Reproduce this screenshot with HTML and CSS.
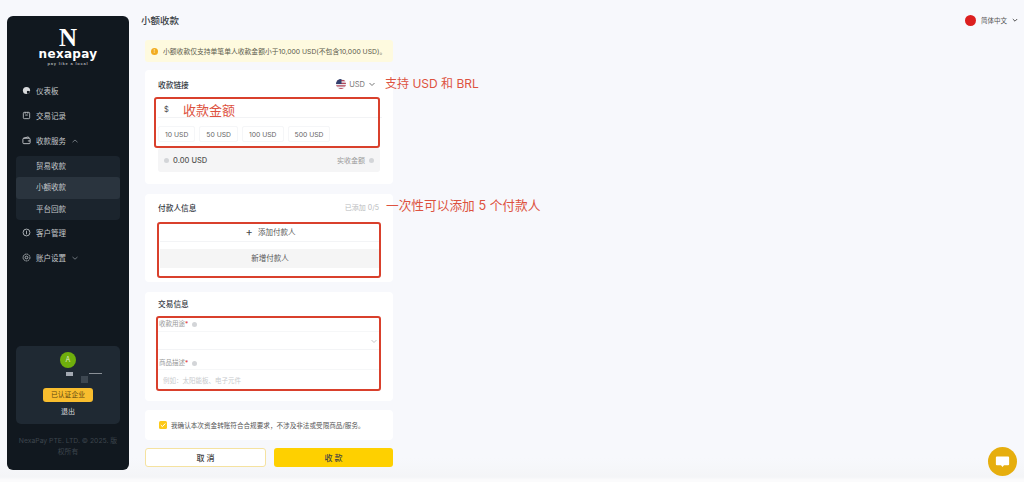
FILE: index.html
```html
<!DOCTYPE html>
<html lang="zh-CN">
<head>
<meta charset="utf-8">
<title>小额收款</title>
<link rel="stylesheet" href="styles.css">
</head>
<body>
<div class="app">
  <aside class="sidebar">
    <div class="logo">
      <div class="logo-n">N</div>
      <div class="logo-name">nexapay</div>
      <div class="logo-tag">pay like a local</div>
    </div>
    <nav class="nav">
      <div class="nav-item">
        <svg class="ico" viewBox="0 0 10 10"><circle cx="5" cy="5" r="4" fill="#d8dadc"/><rect x="5.5" y="5.5" width="3" height="3" fill="#11181f"/></svg>
        <span>仪表板</span>
      </div>
      <div class="nav-item">
        <svg class="ico" viewBox="0 0 10 10" fill="none" stroke="#b8bcc0"><rect x="1.5" y="1.5" width="7" height="7" rx="1"/><path d="M3.5 4.5h3M3.5 1v2M6.5 1v2"/></svg>
        <span>交易记录</span>
      </div>
      <div class="nav-item">
        <svg class="ico" viewBox="0 0 10 10" fill="none" stroke="#c8cbce"><rect x="1" y="2.5" width="8" height="6" rx="1"/><path d="M1.500 2.500 7 1l1 1.500M6.500 5.500h2.500"/></svg>
        <span>收款服务</span>
        <svg class="caret" viewBox="0 0 8 8" fill="none" stroke="#6d747b"><path d="M1.500 5.200 4 3l2.500 2.200"/></svg>
      </div>
      <div class="subnav">
        <div class="sub-item">贸易收款</div>
        <div class="sub-item active">小额收款</div>
        <div class="sub-item">平台回款</div>
      </div>
      <div class="nav-item">
        <svg class="ico" viewBox="0 0 10 10" fill="none" stroke="#b8bcc0"><circle cx="5" cy="5" r="3.800"/><path d="M5 3v4"/></svg>
        <span>客户管理</span>
      </div>
      <div class="nav-item">
        <svg class="ico" viewBox="0 0 10 10" fill="none" stroke="#b8bcc0"><circle cx="5" cy="5" r="3.800" stroke-dasharray="2 .5"/><circle cx="5" cy="5" r="1.500"/></svg>
        <span>账户设置</span>
        <svg class="caret" viewBox="0 0 8 8" fill="none" stroke="#6d747b"><path d="M1.500 3 4 5.200 6.500 3"/></svg>
      </div>
    </nav>
    <div class="user">
      <div class="avatar">A</div>
      <div class="masked">
        <i class="mask-a"></i><i class="mask-b"></i><i class="mask-c"></i>
      </div>
      <div class="badge">已认证企业</div>
      <div class="logout">退出</div>
    </div>
    <div class="copyright">NexaPay PTE. LTD. © 2025. 版权所有</div>
  </aside>

  <main class="main">
    <header class="header">
      <h1 class="title">小额收款</h1>
      <div class="lang">
        <span class="flag-cn"></span>
        <span>简体中文</span>
        <svg class="chev-lang" viewBox="0 0 6 6" fill="none" stroke="#555"><path d="M.8 2 3 4.200 5.200 2"/></svg>
      </div>
    </header>

    <div class="form">
      <div class="notice">
        <span class="notice-dot">!</span>
        <span>小额收款仅支持单笔单人收款金额小于10,000 USD(不包含10,000 USD)。</span>
      </div>

      <section class="card card-link">
        <div class="card-head">
          <h2>收款链接</h2>
          <div class="currency">
            <svg class="flag-us" viewBox="0 0 10 10"><defs><clipPath id="c"><circle cx="5" cy="5" r="5"/></clipPath></defs><g clip-path="url(#c)"><rect width="10" height="10" fill="#e8e8ee"/><path d="M0 1h10v1.300H0zM0 3.700h10V5H0zM0 6.300h10v1.300H0zM0 9h10v1H0z" fill="#b5485a"/><rect width="5.500" height="5" fill="#33406e"/></g></svg>
            <span>USD</span>
            <svg class="chev" viewBox="0 0 8 8" fill="none" stroke="#777"><path d="M1.500 3 4 5.500 6.500 3"/></svg>
          </div>
        </div>
        <div class="amount-row"><span>$</span></div>
        <div class="chips">
          <span class="chip">10 USD</span>
          <span class="chip">50 USD</span>
          <span class="chip">100 USD</span>
          <span class="chip">500 USD</span>
        </div>
        <div class="result">
          <span class="result-left"><i class="dot"></i><b>0.00 USD</b></span>
          <span class="result-right">实收金额<i class="dot"></i></span>
        </div>
        <div class="mark mark-amount"></div>
        <div class="anno anno-amount">收款金额</div>
        <div class="anno anno-currency">支持 USD 和 BRL</div>
      </section>

      <section class="card card-payer">
        <div class="card-head">
          <h2>付款人信息</h2>
          <span class="count">已添加 0/5</span>
        </div>
        <div class="add-row"><span class="plus">+</span>添加付款人</div>
        <div class="new-row">新增付款人</div>
        <div class="mark mark-payer"></div>
        <div class="anno anno-payer">一次性可以添加 5 个付款人</div>
      </section>

      <section class="card card-trade">
        <h2>交易信息</h2>
        <div class="label">收款用途<em>*</em><i class="dot"></i></div>
        <div class="field">
          <svg class="chev" viewBox="0 0 8 8" fill="none" stroke="#c4c6ca"><path d="M1.500 3 4 5.500 6.500 3"/></svg>
        </div>
        <div class="label">商品描述<em>*</em><i class="dot"></i></div>
        <div class="field field-input">例如：太阳能板、电子元件</div>
        <div class="mark mark-trade"></div>
      </section>

      <section class="card card-confirm">
        <span class="check"><svg viewBox="0 0 8 8" fill="none" stroke="#fff"><path d="M1.800 4.100 3.400 5.600 6.300 2.500"/></svg></span>
        <span>我确认本次资金转账符合合规要求，不涉及非法或受限商品/服务。</span>
      </section>

      <div class="actions">
        <button class="btn btn-ghost">取 消</button>
        <button class="btn btn-primary">收 款</button>
      </div>
    </div>
  </main>
</div>
<div class="chat">
  <svg viewBox="0 0 12 12"><path d="M1.500 2h9a.8.8 0 0 1 .8.8v5.400a.8.8 0 0 1-.8.8H7.200L6 10.300 4.800 9H1.500a.8.8 0 0 1-.8-.8V2.800a.8.8 0 0 1 .8-.8z" fill="#fff"/></svg>
</div>
</body>
</html>
```
FILE: styles.css
```css
* { box-sizing: border-box; }
html, body { margin: 0; height: 100%; }
body {
  background: linear-gradient(#f7f8fc 458px, #f4f5f7 477px, #fbfbfc 480px);
  font-family: "Inter", "Noto Sans CJK SC", sans-serif;
  font-size: 8px;
  color: #444a52;
  overflow: hidden;
}
h1, h2 { margin: 0; font-weight: 500; }
i { font-style: normal; }
em { font-style: normal; color: #e04040; }

.app { display: flex; height: 482px; padding: 16px 0 12px 7px; }

/* Sidebar */
.sidebar {
  width: 122px;
  height: 454px;
  flex: none;
  display: flex;
  flex-direction: column;
  background: #11181f;
  border-radius: 6px;
  padding: 12px 9px 0;
  color: #c4c7ca;
}
.logo { display: flex; flex-direction: column; align-items: center; color: #fff; }
.logo-n { font: 700 25px/20px "Liberation Serif", serif; }
.logo-name { font: 700 12px/13px "DejaVu Sans", sans-serif; letter-spacing: .3px; }
.logo-tag { font: 700 4px/6px "Liberation Sans", sans-serif; letter-spacing: .8px; color: #aeb2b6; }

.nav { margin-top: 11px; display: flex; flex-direction: column; }
.nav-item { display: flex; align-items: center; height: 25px; padding-left: 6px; font-size: 7.500px; }
.ico { width: 9px; height: 9px; margin-right: 5px; flex: none; }
.caret { width: 8px; height: 8px; margin-left: 5px; }
.subnav { background: #1b242d; border-radius: 4px; margin: 3px 0 0; }
.sub-item { height: 21px; line-height: 21px; padding-left: 20px; font-size: 7.500px; }
.sub-item.active { background: #2a343e; border-radius: 3px; height: 22px; line-height: 22px; }

.user {
  margin-top: auto;
  height: 78px;
  background: #1f2933;
  border-radius: 5px;
  display: flex;
  flex-direction: column;
  align-items: center;
  padding-top: 6px;
}
.avatar {
  width: 16px; height: 16px; border-radius: 50%;
  background: #6fae0c; color: #dfe8c8;
  font-size: 7px; line-height: 16px; text-align: center;
  flex: none;
}
.masked { width: 68px; height: 20px; display: flex; flex: none; }
.mask-a { width: 7px; height: 4px; background: #a3a9b2; margin: 4px 0 0 32px; }
.mask-b { width: 7px; height: 7px; background: #3d4751; margin: 8px 0 0 8px; }
.mask-c { width: 14px; height: 1px; background: #8a9097; margin: 5px 0 0 1px; }
.badge {
  width: 50px; height: 14px; line-height: 14px; text-align: center;
  background: #f8bd2e; color: #5d4710; border-radius: 3px; font-size: 6.800px;
  flex: none;
}
.logout { margin-top: 4px; font-size: 7px; color: #d4d6d8; line-height: 12px; }
.copyright {
  margin: 11px 0 13px;
  height: 22px;
  text-align: center;
  font-size: 6.800px;
  line-height: 11px;
  color: #3d454d;
}

/* Main */
.main { flex: 1; padding-left: 12px; min-width: 0; }
.header { display: flex; justify-content: space-between; align-items: center; height: 8px; margin-bottom: 16px; }
.title { font-size: 9.500px; color: #3a3f46; }
.lang { display: flex; align-items: center; gap: 5px; font-size: 6.500px; color: #555; padding-right: 6px; }
.flag-cn { width: 11px; height: 11px; border-radius: 50%; background: #dc1f1f; }
.chev { width: 8px; height: 8px; flex: none; }
.chev-lang { width: 6px; height: 6px; flex: none; }

.form { width: 248px; margin-left: 4px; display: flex; flex-direction: column; }
.notice {
  height: 22px; margin-bottom: 8px;
  background: #fefadf; border-radius: 3px;
  display: flex; align-items: center; gap: 5px; padding-left: 6px;
  font-size: 6.800px; color: #5c5a4c; white-space: nowrap;
}
.notice-dot {
  width: 7px; height: 7px; border-radius: 50%; background: #f2ac1f;
  color: #fff; font-size: 5px; line-height: 7px; text-align: center; flex: none;
}
.card { position: relative; background: #fff; border-radius: 4px; padding: 0 13px; }
.card h2 { font-size: 7.700px; color: #33383f; }
.card-head { display: flex; justify-content: space-between; align-items: center; }

.card-link { height: 114px; padding-top: 7px; margin-bottom: 10px; }
.card-link .card-head { height: 14px; padding-right: 4px; }
.currency { display: flex; align-items: center; gap: 3px; font-size: 7.500px; color: #777; height: 14px; }
.flag-us { width: 10px; height: 10px; }
.amount-row { height: 22px; margin-top: 5px; padding: 9px 0 0 6px; font-size: 7.500px; line-height: 10px; color: #444; border-bottom: 1px solid #f2f3f5; margin-right: -2px; }
.chips { display: flex; gap: 4px; margin-top: 8px; }
.chip {
  height: 16px; line-height: 15px; padding: 0 6px;
  font-size: 6.800px; color: #666; border: 1px solid #f5f6f8; border-radius: 2px;
  white-space: nowrap;
}
.result {
  height: 24px; margin: 6px 0 0 0; background: #f5f5f6; border-radius: 3px;
  display: flex; justify-content: space-between; align-items: center; padding: 0 6px; color: #999;
}
.result-left, .result-right { display: flex; align-items: center; gap: 4px; font-size: 7px; }
.result-left b { font-weight: 500; color: #555; font-size: 7.500px; }
.dot { display: inline-block; width: 5px; height: 5px; border-radius: 50%; background: #d3d5d8; }

.mark {
  position: absolute; border: 2px solid #d9402c; border-radius: 3px; pointer-events: none;
}
.mark-amount { left: 9px; top: 27px; width: 226px; height: 51px; }
.mark-payer { left: 12px; top: 28px; width: 224px; height: 56px; }
.mark-trade { left: 11px; top: 24px; width: 225px; height: 75px; }
.anno { position: absolute; color: #dd5240; white-space: nowrap; font-size: 12px; line-height: 16px; }
.anno-amount { left: 38px; top: 32px; font-size: 13px; }
.anno-currency { left: 240px; top: 6px; }
.anno-payer { left: 241px; top: 4px; font-size: 12.700px; }

.card-payer { height: 88px; padding-top: 6px; margin-bottom: 10px; }
.card-payer .card-head { height: 14px; margin-right: 1px; }
.count { font-size: 7px; color: #b9bbbe; }
.add-row {
  height: 20px; margin: 8px -1px 0 2px;
  display: flex; align-items: center; justify-content: center; gap: 3px;
  font-size: 7.500px; color: #555; border-bottom: 1px solid #f3f4f6;
}
.plus { font-size: 11px; line-height: 10px; margin-right: 2px; color: #444; }
.new-row {
  height: 19px; line-height: 19px; margin: 7px 0 0 2px; text-align: center;
  background: #f5f5f5; font-size: 7.500px; color: #555;
}

.card-trade { height: 109px; padding-top: 7px; margin-bottom: 9px; }
.card-trade h2 { line-height: 12px; }
.label { margin-top: 7px; padding-left: 1px; height: 12px; line-height: 12px; color: #999; font-size: 6.500px; display: flex; align-items: center; }
.label .dot { margin-left: 4px; }
.field { height: 19px; border-bottom: 1px solid #f3f4f6; margin-right: -1px; display: flex; align-items: center; justify-content: flex-end; padding-right: 3px; margin-top: 1px; border-top: 1px solid #f6f7f8; }
.field-input { height: 20px; margin-top: 0; justify-content: flex-start; padding-left: 5px; color: #c9cbce; font-size: 6.500px; border-bottom: 0; }

.card-confirm { height: 30px; padding-left: 14px; display: flex; align-items: center; gap: 4px; font-size: 6.600px; color: #555; margin-bottom: 8px; white-space: nowrap; }
.check { width: 8px; height: 8px; border-radius: 1.500px; background: #fcc91a; display: flex; flex: none; }

.actions { display: flex; gap: 8px; }
.btn { flex: 1; height: 19px; border-radius: 3px; font: 500 8px/1 "Inter", "Noto Sans CJK SC", sans-serif; color: #444; padding: 0; }
.btn-ghost { background: #fff; border: 1px solid #f5e2a0; }
.btn-primary { background: #fed000; border: 0; }

.chat {
  position: fixed; right: 7px; bottom: 6px; width: 29px; height: 29px; border-radius: 50%;
  background: #e6ae0e; display: flex; align-items: center; justify-content: center;
}
.chat svg { width: 15px; height: 15px; }
```
